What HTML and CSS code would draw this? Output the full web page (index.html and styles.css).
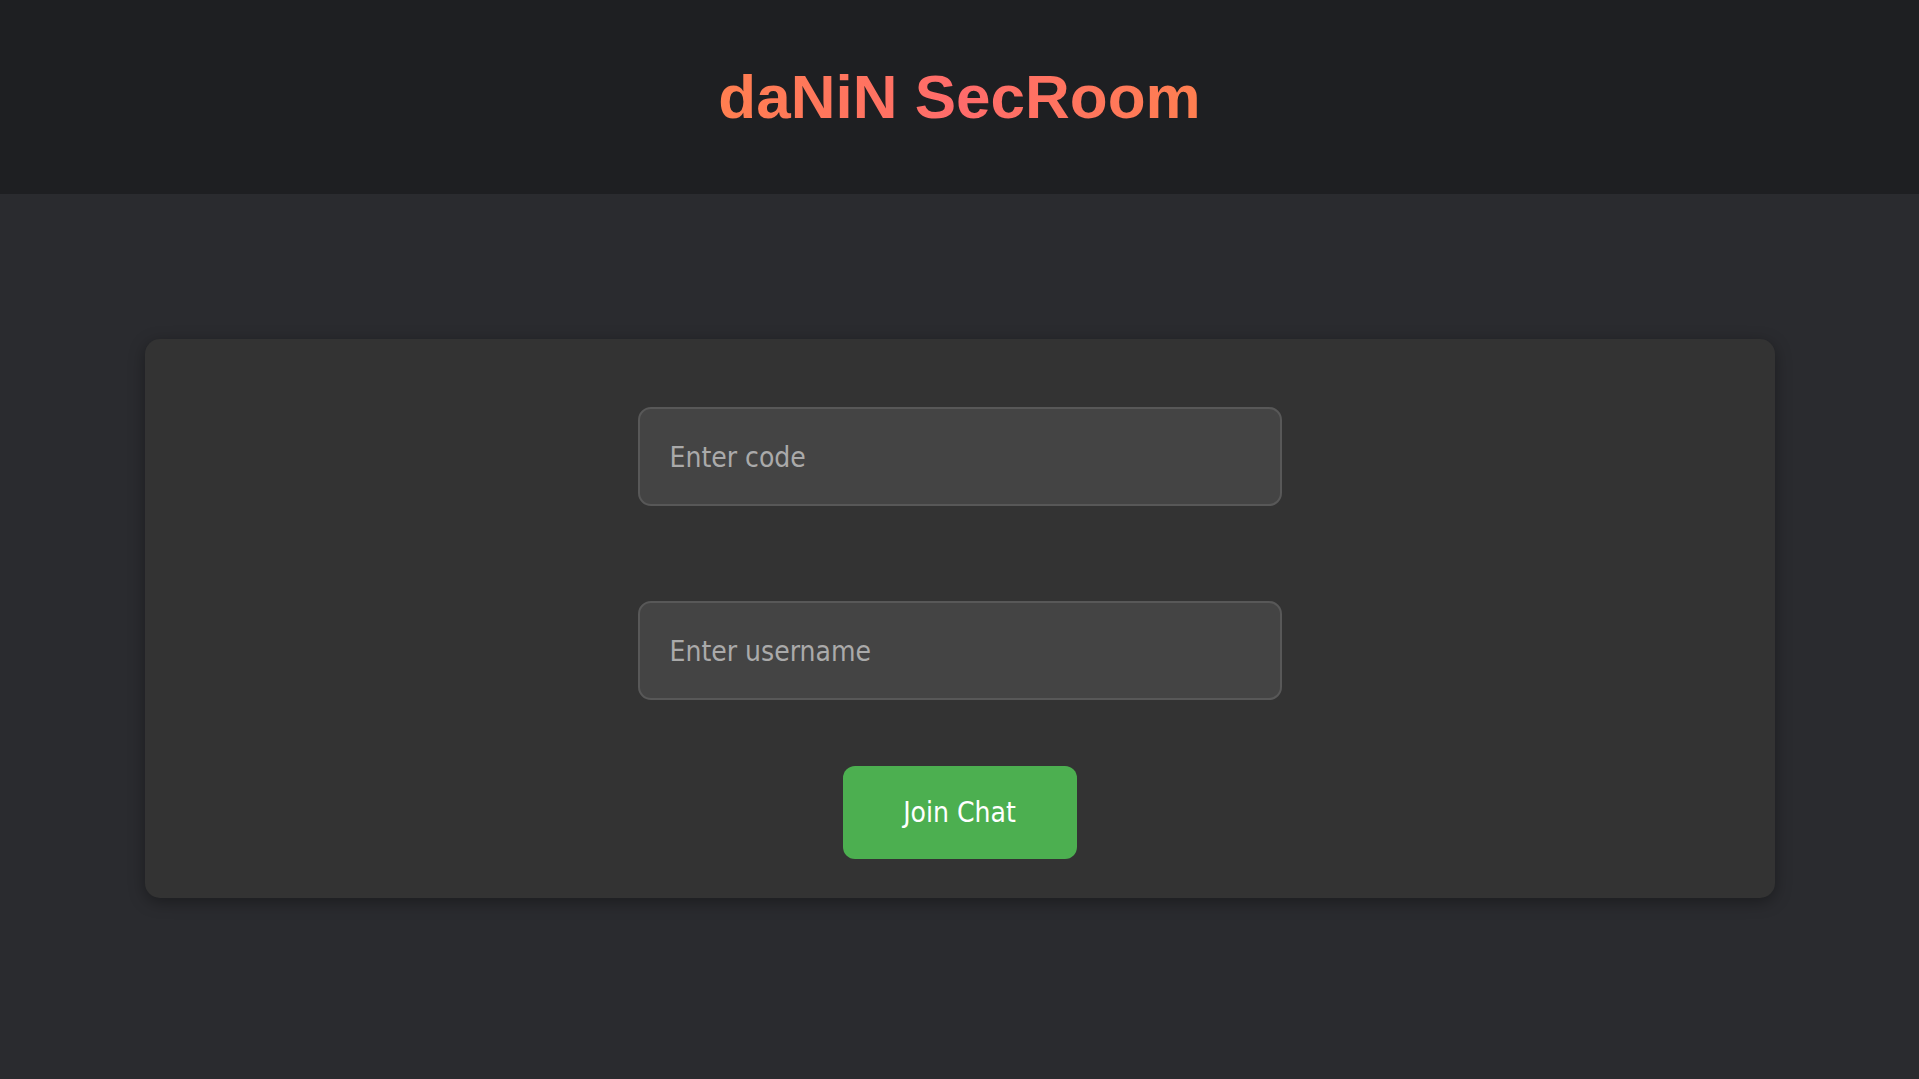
FILE: index.html
```html
<!DOCTYPE html>
<html lang="en">
<head>
<meta charset="utf-8">
<title>daNiN SecRoom</title>
<link rel="stylesheet" href="styles.css">
</head>
<body>
<header class="top-bar">
  <h1 class="brand">daNiN SecRoom</h1>
</header>
<main class="main">
  <section class="card">
    <input class="field" type="text" placeholder="Enter code">
    <input class="field" type="text" placeholder="Enter username">
    <button class="join-btn" type="button">Join Chat</button>
  </section>
</main>
</body>
</html>
```
FILE: styles.css
```css
* { box-sizing: border-box; }
html, body { margin: 0; padding: 0; }
body {
  background: #2a2b2f;
  min-height: 1079px;
  font-family: "DejaVu Sans Condensed", "DejaVu Sans", sans-serif;
}
.top-bar {
  height: 194px;
  background: #1e1f22;
  display: flex;
  align-items: center;
  justify-content: center;
}
.brand {
  margin: 0;
  font-family: "Liberation Sans", Arial, sans-serif;
  font-weight: bold;
  font-size: 62px;
  line-height: 1.2;
  background: linear-gradient(90deg, #ff7f50, #ff6b6b 50%, #ff7f50);
  -webkit-background-clip: text;
  background-clip: text;
  color: transparent;
}
.main {
  padding-top: 145px;
  display: flex;
  justify-content: center;
}
.card {
  width: 1630px;
  height: 559px;
  background: #333333;
  border-radius: 15px;
  box-shadow: 0 4px 16px rgba(0, 0, 0, 0.35);
  display: flex;
  flex-direction: column;
  align-items: center;
  padding-top: 68px;
}
.field {
  width: 644px;
  height: 99px;
  background: #444444;
  border: 2px solid #585858;
  border-radius: 13px;
  padding: 2px 30px 0;
  font-family: "DejaVu Sans Condensed", "DejaVu Sans", sans-serif;
  font-size: 28px;
  color: #ddd;
  outline: none;
}
.field::placeholder { color: #aaaaaa; }
.field + .field { margin-top: 95px; }
.join-btn {
  margin-top: 66px;
  width: 234px;
  height: 93px;
  background: #4caf50;
  border: none;
  border-radius: 12px;
  color: #ffffff;
  font-family: "DejaVu Sans Condensed", "DejaVu Sans", sans-serif;
  font-size: 28px;
  cursor: pointer;
}
```
